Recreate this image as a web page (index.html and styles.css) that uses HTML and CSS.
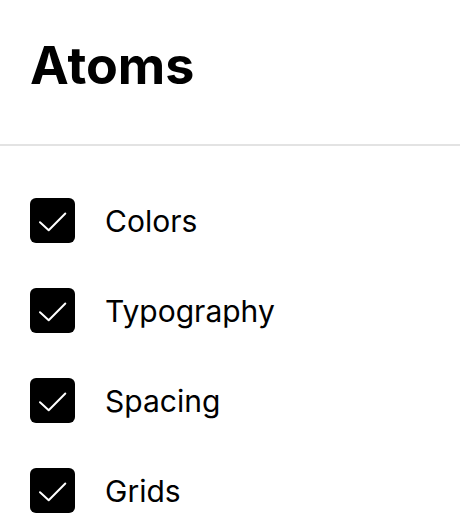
FILE: index.html
```html
<!DOCTYPE html>
<html lang="en">
<head>
    <meta charset="UTF-8">
    <meta name="viewport" content="width=device-width, initial-scale=1.0">
    <title>Atoms</title>
    <link rel="stylesheet" href="styles.css">
</head>
<body>

<!-- Header -->
<header class="panel-header">
    <h1>Atoms</h1>
</header>

<!-- Checklist -->
<ul class="checklist">
    <li class="check-item">
        <span class="checkbox">
            <svg viewBox="0 0 45 45" width="45" height="45"><path d="M10 24.3 L18.7 32.3 L35.3 15.5"/></svg>
        </span>
        <span class="label">Colors</span>
    </li>
    <li class="check-item">
        <span class="checkbox">
            <svg viewBox="0 0 45 45" width="45" height="45"><path d="M10 24.3 L18.7 32.3 L35.3 15.5"/></svg>
        </span>
        <span class="label">Typography</span>
    </li>
    <li class="check-item">
        <span class="checkbox">
            <svg viewBox="0 0 45 45" width="45" height="45"><path d="M10 24.3 L18.7 32.3 L35.3 15.5"/></svg>
        </span>
        <span class="label">Spacing</span>
    </li>
    <li class="check-item">
        <span class="checkbox">
            <svg viewBox="0 0 45 45" width="45" height="45"><path d="M10 24.3 L18.7 32.3 L35.3 15.5"/></svg>
        </span>
        <span class="label">Grids</span>
    </li>
</ul>

</body>
</html>
```

FILE: styles.css
```css
/* General styles */
body {
    font-family: Inter, "Noto Sans", sans-serif;
    background-color: #fff;
    color: #000;
    margin: 0;
    padding: 0;
}

/* Header */
.panel-header {
    padding: 35px 30px 0;
    height: 109px;
    border-bottom: 2px solid #e3e3e3;
}

.panel-header h1 {
    margin: 0;
    font-size: 52px;
    font-weight: 700;
    line-height: 62px;
}

/* Checklist */
.checklist {
    list-style-type: none;
    margin: 0;
    padding: 52px 30px 0;
    display: flex;
    flex-direction: column;
    gap: 45px;
}

.check-item {
    display: flex;
    align-items: center;
    gap: 30px;
    height: 45px;
}

.checkbox {
    width: 45px;
    height: 45px;
    background-color: #000;
    border-radius: 6px;
    flex-shrink: 0;
}

.checkbox svg {
    display: block;
    fill: none;
    stroke: #fff;
    stroke-width: 2;
    stroke-linecap: round;
    stroke-linejoin: round;
}

.label {
    font-size: 30px;
    line-height: 36px;
}
```
